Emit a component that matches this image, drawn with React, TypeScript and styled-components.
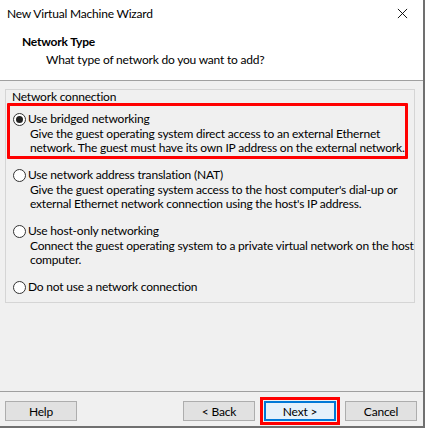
import styled, { createGlobalStyle } from "styled-components";

const GlobalStyle = createGlobalStyle`
  html, body {
    margin: 0;
    padding: 0;
    background: #ffffff;
  }
  body {
    font-family: Lato, "Noto Sans", "DejaVu Sans", sans-serif;
    font-size: 12px;
    letter-spacing: -0.2px;
    color: #000;
  }
`

type NetOption = {
    label: string,
    desc?: string[],
    checked?: boolean,
    highlighted?: boolean
}

const options: NetOption[] = [
    {
        label: "Use bridged networking",
        desc: [
            "Give the guest operating system direct access to an external Ethernet",
            "network. The guest must have its own IP address on the external network."
        ],
        checked: true,
        highlighted: true
    },
    {
        label: "Use network address translation (NAT)",
        desc: [
            "Give the guest operating system access to the host computer's dial-up or",
            "external Ethernet network connection using the host's IP address."
        ]
    },
    {
        label: "Use host-only networking",
        desc: [
            "Connect the guest operating system to a private virtual network on the host",
            "computer."
        ]
    },
    {label: "Do not use a network connection"}
]

const Radio = ({checked}: { checked?: boolean }) => (
    <RadioCircle>
        {checked && <RadioDot/>}
    </RadioCircle>
)

const App = () => {
    return (
        <>
            <GlobalStyle/>
            <Window>
                <TitleBar>
                    <TitleText>New Virtual Machine Wizard</TitleText>
                    <CloseIcon viewBox="0 0 12 12">
                        <path d="M1 1 L11 11 M11 1 L1 11" stroke="#000" strokeWidth="1"/>
                    </CloseIcon>
                </TitleBar>
                <Header>
                    <HeaderTitle>Network Type</HeaderTitle>
                    <HeaderSub>What type of network do you want to add?</HeaderSub>
                </Header>
                <Body>
                    <GroupBox>
                        <GroupLabel>Network connection</GroupLabel>
                        <OptionList>
                            {options.map(opt => (
                                <OptionItem key={opt.label} highlighted={!!opt.highlighted}>
                                    <OptionRow>
                                        <Radio checked={opt.checked}/>
                                        <span>{opt.label}</span>
                                    </OptionRow>
                                    {opt.desc && (
                                        <OptionDesc>
                                            {opt.desc.map(line => <div key={line}>{line}</div>)}
                                        </OptionDesc>
                                    )}
                                </OptionItem>
                            ))}
                        </OptionList>
                    </GroupBox>
                </Body>
                <Footer>
                    <WinButton>Help</WinButton>
                    <ButtonGroup>
                        <WinButton>&lt; Back</WinButton>
                        <WinButton primary highlighted>Next &gt;</WinButton>
                        <WinButton>Cancel</WinButton>
                    </ButtonGroup>
                </Footer>
            </Window>
        </>
    )
}

export default App

const Window = styled.div`
  width: 425px;
  height: 428px;
  box-sizing: border-box;
  border-right: 2px solid #707070;
  border-bottom: 2px solid #707070;
  display: flex;
  flex-direction: column;
  background: #f0f0f0;
  overflow: hidden;
  white-space: nowrap;
`
const TitleBar = styled.div`
  height: 29px;
  display: flex;
  align-items: center;
  justify-content: space-between;
  padding: 0 15px 0 7px;
  background: #fff;
`
const TitleText = styled.div`
  font-size: 12px;
  padding-bottom: 3px;
`
const CloseIcon = styled.svg`
  width: 11px;
  height: 11px;
  margin-bottom: 3px;
`
const Header = styled.div`
  height: 52px;
  background: #fff;
  border-bottom: 1px solid #a0a0a0;
  padding: 4px 0 0 22px;
  box-sizing: border-box;
`
const HeaderTitle = styled.div`
  font-weight: 700;
  line-height: 18px;
`
const HeaderSub = styled.div`
  padding-left: 24px;
  line-height: 18px;
`
const Body = styled.div`
  flex: 1;
  padding: 8px 8px 0 5px;
  border-bottom: 1px solid #a0a0a0;
`
const GroupBox = styled.div`
  height: 214px;
  box-sizing: border-box;
  border: 1px solid #d5d5d5;
  padding: 0 0 0 1px;
`
const GroupLabel = styled.div`
  line-height: 13px;
  padding: 0 0 0 5px;
`
const OptionList = styled.div`
  display: flex;
  flex-direction: column;
`
const OptionItem = styled.div<{ highlighted: boolean }>`
  width: 401px;
  box-sizing: border-box;
  border: 3px solid ${props => props.highlighted ? '#ff0000' : 'transparent'};
  border-radius: 1px;
  padding: 5px 0 1px 3px;
`
const OptionRow = styled.div`
  display: flex;
  align-items: center;
  gap: 2px;
  line-height: 16px;
`
const RadioCircle = styled.div`
  width: 11px;
  height: 11px;
  border: 1px solid #333;
  border-radius: 50%;
  display: flex;
  align-items: center;
  justify-content: center;
  background: #fff;
  flex-shrink: 0;
`
const RadioDot = styled.div`
  width: 7px;
  height: 7px;
  border-radius: 50%;
  background: #222;
`
const OptionDesc = styled.div`
  padding-left: 17px;
  line-height: 14px;
`
const Footer = styled.div`
  height: 34px;
  display: flex;
  align-items: flex-start;
  justify-content: space-between;
  padding: 9px 6px 0 5px;
  box-sizing: border-box;
`
const ButtonGroup = styled.div`
  display: flex;
  gap: 9px;
`
const WinButton = styled.div<{ primary?: boolean, highlighted?: boolean }>`
  width: 72px;
  height: 20px;
  box-sizing: border-box;
  display: flex;
  align-items: center;
  justify-content: center;
  background: ${props => props.primary ? '#e5f1fb' : '#e1e1e1'};
  border: ${props => props.primary ? '2px solid #0078d7' : '1px solid #adadad'};
  outline: ${props => props.highlighted ? '3px solid #ff0000' : 'none'};
  outline-offset: 1px;
  font-size: 12px;
`
